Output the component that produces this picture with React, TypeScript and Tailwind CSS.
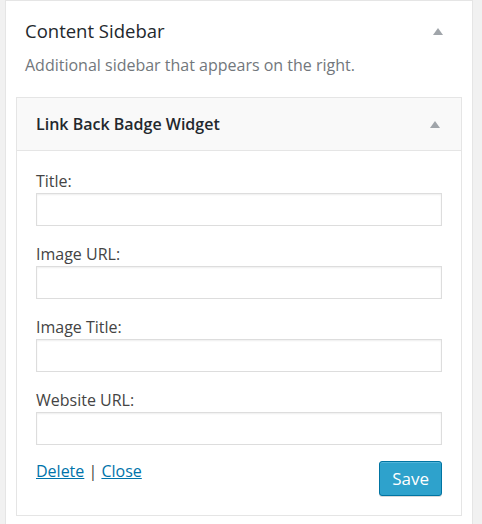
const fields = ['Title:', 'Image URL:', 'Image Title:', 'Website URL:'];

function Arrow() {
  return (
    <svg width="10" height="7" viewBox="0 0 10 7" className="fill-[#a0a5aa]">
      <path d="M5 0 L10 7 L0 7 Z" />
    </svg>
  );
}

export default function App() {
  return (
    <div className="w-[482px] h-[524px] overflow-hidden bg-[#f1f1f1] pl-[5px] pr-[9px] font-['Open_Sans',sans-serif]">
      <div className="h-full bg-white border border-[#e5e5e5] border-b-0 px-[10px]">
        {/* Sidebar heading */}
        <div className="flex items-center justify-between pl-[9px] pr-[19px] pt-[16px]">
          <h2 className="text-[18.5px] leading-[28px] font-medium text-[#23282d]">Content Sidebar</h2>
          <Arrow />
        </div>
        <p className="pl-[9px] mt-[9px] text-[16px] leading-[22px] text-[#72777c]">
          Additional sidebar that appears on the right.
        </p>

        {/* Widget */}
        <div className="mt-[21px] border border-[#e5e5e5] bg-white">
          <div className="flex items-center justify-between h-[53px] bg-[#f9f9f9] border-b border-[#e5e5e5] pl-[19px] pr-[21px]">
            <h3 className="text-[16px] font-semibold text-[#23282d]">Link Back Badge Widget</h3>
            <Arrow />
          </div>
          <div className="px-[19px] pt-[20px] pb-[19px]">
            {fields.map((f) => (
              <div key={f} className="mb-[18px]">
                <label className="block text-[16px] leading-[20px] text-[#444]">{f}</label>
                <input
                  type="text"
                  className="mt-[2px] block w-full h-[33px] border border-[#ddd] bg-white shadow-[inset_0_1px_2px_rgba(0,0,0,0.07)] outline-none"
                />
              </div>
            ))}
            <div className="flex items-start justify-between -mt-[2px]">
              <div className="text-[16px] leading-[20px] text-[#444]">
                <a href="#" className="text-[#0073aa] underline">Delete</a>
                {' | '}
                <a href="#" className="text-[#0073aa] underline">Close</a>
              </div>
              <button className="h-[35px] px-[12px] rounded-[3px] bg-[#2ea2cc] border border-[#0074a2] text-white text-[17px] shadow-[inset_0_1px_0_rgba(120,200,230,0.5),0_1px_0_rgba(0,0,0,0.15)]">
                Save
              </button>
            </div>
          </div>
        </div>
      </div>
    </div>
  );
}
